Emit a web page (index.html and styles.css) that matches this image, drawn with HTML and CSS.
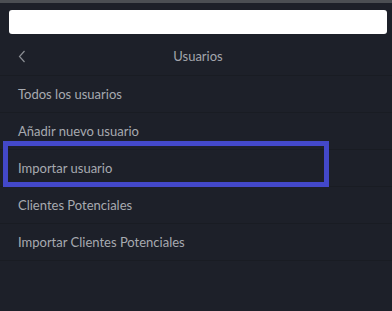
FILE: index.html
```html
<!DOCTYPE html>
<html>
<head>
	<title>Usuarios</title>
	<link rel="stylesheet" href="styles.css">
</head>
<body>
	<div class="topbar"></div>
	<div class="search"><input type="text"></div>
	<div class="header">
		<a href="#" class="back">
			<svg width="8" height="13" viewBox="0 0 8 13"><path d="M6.5 1 L1.5 6.5 L6.5 12" fill="none" stroke="#8b8e94" stroke-width="1.2"/></svg>
		</a>
		<span class="title">Usuarios</span>
	</div>
	<ul class="menu">
		<li><a href="#">Todos los usuarios</a></li>
		<li><a href="#">Añadir nuevo usuario</a></li>
		<li class="selected"><a href="#">Importar usuario</a></li>
		<li><a href="#">Clientes Potenciales</a></li>
		<li><a href="#">Importar Clientes Potenciales</a></li>
	</ul>
	<div class="highlight"></div>
</body>
</html>
```

FILE: styles.css
```css
html, body {
	margin: 0;
	padding: 0;
	height: 100%;
}
body {
	background: #1d2029;
	font: 400 13px Lato, "Liberation Sans", sans-serif;
	color: #a7aab0;
	position: relative;
}
.topbar {
	height: 3px;
	background: #4b4e53;
}
.search {
	padding: 7px 5px 0 9px;
}
.search input {
	display: block;
	box-sizing: border-box;
	width: 100%;
	height: 24px;
	border: 0;
	border-radius: 3px;
	background: #fff;
}
.header {
	height: 38px;
	margin-top: 3px;
	padding-left: 4px;
	display: flex;
	align-items: center;
	justify-content: center;
	position: relative;
	border-bottom: 1px solid #191c23;
}
.back {
	position: absolute;
	left: 18px;
	top: 13px;
	line-height: 0;
}
.title {
	color: #a3a6ac;
}
.menu {
	list-style: none;
	margin: 0;
	padding: 0;
}
.menu li {
	height: 36px;
	border-bottom: 1px solid #191c23;
}
.menu a {
	display: block;
	line-height: 36px;
	padding-left: 18px;
	color: #a7aab0;
	text-decoration: none;
}
.highlight {
	position: absolute;
	left: 3px;
	top: 141px;
	width: 316px;
	height: 36px;
	border: 5px solid #4348c9;
}
```
